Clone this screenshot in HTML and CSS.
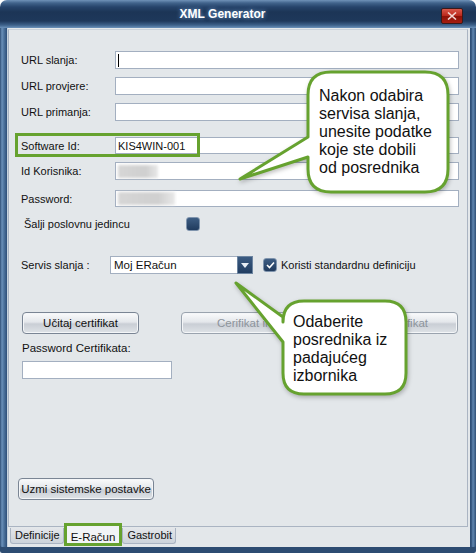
FILE: index.html
```html
<!DOCTYPE html>
<html lang="hr">
<head>
    <meta charset="UTF-8">
    <meta name="viewport" content="width=device-width, initial-scale=1.0">
    <title>XML Generator</title>
    <link rel="stylesheet" href="styles.css">
</head>
<body>
    <div class="window">
        <div class="titlebar">
            <span class="title">XML Generator</span>
            <span class="close-btn">
                <svg width="10" height="8" viewBox="0 0 10 8"><path d="M1 0.5 L9 7.5 M9 0.5 L1 7.5" stroke="#f3d6d2" stroke-width="1.6"/></svg>
            </span>
        </div>

        <div class="client">
            <div class="page">
                <div class="row row-first">
                    <span class="label">URL slanja:</span>
                    <div class="input wide"><span class="caret"></span></div>
                </div>
                <div class="row">
                    <span class="label">URL provjere:</span>
                    <div class="input wide"></div>
                </div>
                <div class="row">
                    <span class="label">URL primanja:</span>
                    <div class="input wide"></div>
                </div>
                <div class="row row-gap">
                    <span class="label">Software Id:</span>
                    <div class="input wide">KIS4WIN-001</div>
                    <span class="highlight highlight-sw"></span>
                </div>
                <div class="row">
                    <span class="label">Id Korisnika:</span>
                    <div class="input wide"><span class="blur blur-short"></span></div>
                </div>
                <div class="row row-pass">
                    <span class="label">Password:</span>
                    <div class="input wide"><span class="blur blur-long"></span></div>
                </div>

                <div class="check-row">
                    <span class="check-label">Šalji poslovnu jedincu</span>
                    <span class="checkbox"></span>
                </div>

                <div class="servis-row">
                    <span class="servis-label">Servis slanja :</span>
                    <div class="combo">
                        <span class="combo-text">Moj ERačun</span>
                        <span class="combo-btn">
                            <svg width="8" height="5" viewBox="0 0 8 5"><path d="M0 0 H8 L4 5 Z" fill="#e8eef5"/></svg>
                        </span>
                    </div>
                    <span class="checkbox checked">
                        <svg width="9" height="8" viewBox="0 0 9 8"><path d="M1 4 L3.5 6.5 L8 1.5" stroke="#ffffff" stroke-width="1.6" fill="none"/></svg>
                    </span>
                    <span class="check-text">Koristi standardnu definiciju</span>
                </div>

                <div class="btn-row">
                    <button class="btn btn-load">Učitaj certifikat</button>
                    <button class="btn btn-info" disabled>Cerifikat info</button>
                    <button class="btn btn-del" disabled>Obriši certifikat</button>
                </div>

                <span class="cert-label">Password Certifikata:</span>
                <div class="input cert-input"></div>

                <button class="btn btn-system">Uzmi sistemske postavke</button>
            </div>

            <div class="tabs">
                <span class="tab">Definicije</span>
                <span class="tab tab-active">E-Račun</span>
                <span class="tab">Gastrobit</span>
            </div>
        </div>

        <svg class="callouts" width="476" height="553" viewBox="0 0 476 553">
            <path class="bubble" d="M331 72 H425 Q448 72 448 95 V169 Q448 192 425 192 H331 Q308 192 308 169 V157 L240 179 L308 137 V95 Q308 72 331 72 Z"/>
            <path class="bubble" d="M304 301 H385 Q406 301 406 322 V373 Q406 394 385 394 H304 Q283 394 283 373 V342 L236 283 L283 317 V322 Q283 301 304 301 Z"/>
            <text class="bubble-text" x="319" y="101">Nakon odabira</text>
            <text class="bubble-text" x="319" y="119">servisa slanja,</text>
            <text class="bubble-text" x="319" y="137">unesite podatke</text>
            <text class="bubble-text" x="319" y="155">koje ste dobili</text>
            <text class="bubble-text" x="319" y="173">od posrednika</text>
            <text class="bubble-text" x="293" y="327">Odaberite</text>
            <text class="bubble-text" x="293" y="345">posrednika iz</text>
            <text class="bubble-text" x="293" y="363">padajućeg</text>
            <text class="bubble-text" x="293" y="381">izbornika</text>
        </svg>
    </div>
</body>
</html>
```

FILE: styles.css
```css
body {
    margin: 0;
    background-color: #ffffff;
    font-family: 'Liberation Sans', Arial, sans-serif;
    font-size: 11px;
    color: #111111;
}
.window {
    position: relative;
    width: 476px;
    height: 553px;
    box-sizing: border-box;
    padding: 0 6px 6px 7px;
    display: flex;
    flex-direction: column;
    border-radius: 7px 7px 2px 2px;
    background:
        linear-gradient(to bottom, #7092b8 0, #41638b 3px, #26436a 7px, #1c3556 12px, #1e385b 21px, #3c6089 25px, #6c92bb 28px, rgba(0, 0, 0, 0) 28px),
        linear-gradient(to right, #2f4f76 0, #6a90b9 2px, #4d739d 4px, #2d4e78 7px, #3c608a 8px, #3c608a 468px, #2c4c74 471px, #6086b0 473px, #2f4f76 476px);
    box-shadow: inset 0 -6px 0 #2d4c72, inset 0 -4px 0 #5077a1;
}
.titlebar {
    height: 28px;
    display: flex;
    align-items: center;
    justify-content: center;
    position: relative;
}
.title {
    margin-left: -32px;
    margin-top: -1px;
    color: #ffffff;
    font-weight: bold;
    font-size: 12px;
    text-shadow: 0 0 4px #7aa6d8;
}
.close-btn {
    position: absolute;
    right: 7px;
    top: 8px;
    width: 20px;
    height: 14px;
    border: 1px solid #3a1a1a;
    border-radius: 2px;
    background: linear-gradient(#d9584a, #b8261a 50%, #8c1208 51%, #a61d10);
    display: flex;
    align-items: center;
    justify-content: center;
}
.client {
    flex: 1;
    background-color: #e3e7ea;
    display: flex;
    flex-direction: column;
    border-left: 1px solid #c7d3de;
}
.page {
    flex: 1;
    margin: 1px 2px 0 0;
    border: 1px solid #aab4c2;
    border-top-color: #c9d1db;
    display: flex;
    flex-direction: column;
    padding: 0 0 26px 12px;
}
.row {
    position: relative;
    display: flex;
    align-items: center;
    height: 18px;
    margin-top: 8px;
}
.row-first {
    margin-top: 21px;
}
.row-gap {
    margin-top: 16px;
    height: 17px;
}
.row-pass {
    margin-top: 10px;
    height: 17px;
}
.label {
    width: 94px;
}
.input {
    box-sizing: border-box;
    height: 100%;
    background-color: #ffffff;
    border: 1px solid #a3afc0;
    display: flex;
    align-items: center;
    padding-left: 2px;
    font-size: 11px;
}
.wide {
    width: 344px;
}
.caret {
    width: 1px;
    height: 13px;
    background-color: #000000;
}
.blur {
    height: 13px;
    background: linear-gradient(to right, #d6d6d6, #cfcfcf 70%, #e8e8e8);
    filter: blur(1.5px);
}
.blur-short {
    width: 40px;
}
.blur-long {
    width: 57px;
}
.highlight {
    position: absolute;
    border: 3px solid #66a22f;
}
.highlight-sw {
    left: -6px;
    top: -4px;
    width: 179px;
    height: 18px;
}
.check-row {
    display: flex;
    align-items: center;
    margin-top: 10px;
    height: 14px;
}
.check-label {
    width: 162px;
    margin-left: 3px;
}
.checkbox {
    box-sizing: border-box;
    width: 14px;
    height: 14px;
    border: 1px solid #7f94ad;
    border-radius: 3px;
    background: linear-gradient(#3d5d83, #203b5e);
    display: flex;
    align-items: center;
    justify-content: center;
}
.servis-row {
    display: flex;
    align-items: center;
    margin-top: 25px;
    height: 18px;
}
.servis-label {
    width: 89px;
}
.combo {
    box-sizing: border-box;
    width: 143px;
    height: 18px;
    background-color: #ffffff;
    border: 1px solid #a3afc0;
    display: flex;
    align-items: center;
    font-size: 11.5px;
}
.combo-text {
    flex: 1;
    padding-left: 3px;
}
.combo-btn {
    width: 16px;
    height: 18px;
    margin-right: -1px;
    box-sizing: border-box;
    border: 1px solid #6c84a0;
    background: linear-gradient(#3b5b82, #213d61);
    display: flex;
    align-items: center;
    justify-content: center;
}
.servis-row .checked {
    margin-left: 10px;
}
.check-text {
    margin-left: 4px;
}
.btn {
    box-sizing: border-box;
    height: 22px;
    border: 1px solid #7a8594;
    border-radius: 4px;
    background: linear-gradient(#fafbfc, #e4e7eb 45%, #c9ced5 55%, #dfe3e7);
    font-family: 'Liberation Sans', Arial, sans-serif;
    font-size: 11.5px;
    white-space: nowrap;
    color: #111111;
    padding: 0;
    box-shadow: inset 0 0 0 1px #f4f6f8;
}
.btn:disabled {
    color: #8d949c;
    border-color: #9aa3ae;
}
.btn-row {
    display: flex;
    margin-top: 38px;
}
.btn-load {
    width: 117px;
    margin-left: 1px;
}
.btn-info {
    width: 136px;
    margin-left: 42px;
}
.btn-del {
    width: 136px;
    margin-left: 5px;
}
.cert-label {
    margin: 8px 0 0 1px;
    font-size: 11.5px;
}
.cert-input {
    width: 150px;
    height: 18px;
    margin: 7px 0 0 1px;
}
.btn-system {
    width: 136px;
    margin: auto 0 0 -3px;
}
.tabs {
    height: 20px;
    display: flex;
    align-items: flex-start;
    padding-left: 2px;
}
.tab {
    box-sizing: border-box;
    height: 16px;
    margin-top: 1px;
    padding: 0 3px 0 4px;
    border: 1px solid #aab4c2;
    border-top: none;
    border-radius: 0 0 3px 3px;
    background: linear-gradient(#e3e6ea, #cdd3da);
    font-size: 11px;
    line-height: 15px;
}
.tab-active {
    height: 23px;
    margin-top: -4px;
    padding: 4px 4px 0;
    border: 3px solid #66a22f;
    border-radius: 0;
    background: #f2f4f6;
    line-height: 14px;
    font-size: 11.5px;
}
.callouts {
    position: absolute;
    left: 0;
    top: 0;
    pointer-events: none;
}
.bubble {
    fill: #ffffff;
    stroke: #66a22f;
    stroke-width: 3;
    stroke-linejoin: round;
    filter: drop-shadow(1px 2px 2px rgba(0, 0, 0, 0.25));
}
.bubble-text {
    font-family: 'Liberation Sans', Arial, sans-serif;
    font-size: 16px;
    fill: #111111;
}
```
